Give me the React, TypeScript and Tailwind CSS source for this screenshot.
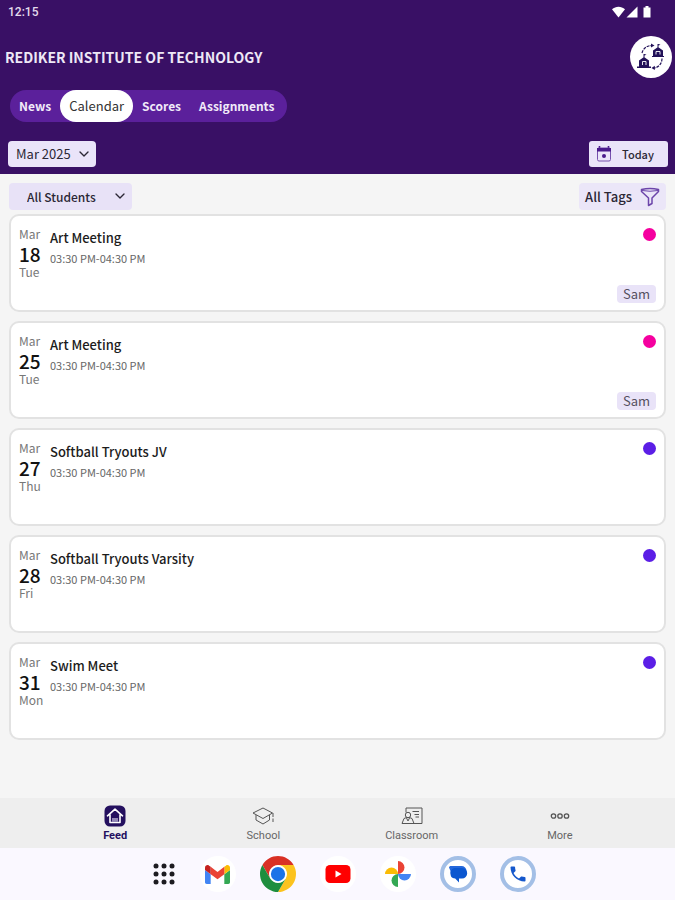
import type { ReactNode } from "react";
import { ChevronDown } from "lucide-react";
import { MdPhone } from "react-icons/md";
import { clsx } from "clsx";

const TABS = ["News", "Calendar", "Scores", "Assignments"];

const EVENTS = [
  { month: "Mar", day: "18", weekday: "Tue", title: "Art Meeting", time: "03:30 PM-04:30 PM", dot: "bg-[#f5009f]", student: "Sam" },
  { month: "Mar", day: "25", weekday: "Tue", title: "Art Meeting", time: "03:30 PM-04:30 PM", dot: "bg-[#f5009f]", student: "Sam" },
  { month: "Mar", day: "27", weekday: "Thu", title: "Softball Tryouts JV", time: "03:30 PM-04:30 PM", dot: "bg-[#5b1ee6]" },
  { month: "Mar", day: "28", weekday: "Fri", title: "Softball Tryouts Varsity", time: "03:30 PM-04:30 PM", dot: "bg-[#5b1ee6]" },
  { month: "Mar", day: "31", weekday: "Mon", title: "Swim Meet", time: "03:30 PM-04:30 PM", dot: "bg-[#5b1ee6]" },
];

function StatusIcons() {
  return (
    <svg className="h-3 w-10" viewBox="0 0 40 12" fill="#fff" aria-hidden="true">
      <path d="M0 3.2C3.6-.2 9.4-.2 13 3.2L6.5 11.5Z" />
      <path d="M25.5.5v11H14.5Z" />
      <path d="M33.5 0h3v1.5h2v10h-7v-10h2Z" />
    </svg>
  );
}

function SwitchSchoolIcon() {
  return (
    <svg className="size-7" viewBox="0 0 28 28" fill="none" stroke="#221158" aria-hidden="true">
      <path d="M5 10C6 5.5 10 2.5 15 2.5" strokeWidth="1.2" strokeDasharray="3 1" />
      <path d="M14 .5l3.5 2L14 4.5Z" fill="#221158" stroke="none" />
      <path d="M25 15.5C25 20.5 21.5 24.5 17 25" strokeWidth="1.2" strokeDasharray="3 1" />
      <path d="M17.8 22.8L14.5 25l3.3 2Z" fill="#221158" stroke="none" />
      <g fill="#221158" stroke="none">
        <path d="M6.5 11h1v3.5h-1ZM7.5 11l2 .8-2 .8ZM2 17.5l5-3.5 5 3.5v6H2ZM0 23.5h14V25H0Z" />
        <path d="M20.5 1h1v3.5h-1ZM21.5 1l2 .8-2 .8ZM16 7.5L21 4l5 3.5v6H16ZM15 13h12v1H15Z" />
      </g>
      <path d="M5.500 22v-3.500H9V22M19 11.500v-3h4v3" stroke="#fff" strokeWidth=".9" />
    </svg>
  );
}

function CalendarIcon() {
  return (
    <svg className="size-4" viewBox="0 0 16 16" aria-hidden="true">
      <path d="M3.5 0v3M12.5 0v3" stroke="#4a1a8c" strokeWidth="1.6" />
      <rect x="1.5" y="2" width="13" height="13" rx="1.5" fill="none" stroke="#7650ad" />
      <path d="M1 2h14v3.5H1Z" fill="#4a1a8c" />
      <circle cx="8" cy="10" r="2" fill="#4a1a8c" />
    </svg>
  );
}

function FunnelIcon() {
  return (
    <svg className="size-5" viewBox="0 0 20 20" fill="none" stroke="#6c45aa" strokeWidth="1.5" strokeLinejoin="round" aria-hidden="true">
      <path d="M1.5 2.5Q10 .5 18.5 2.5v2L12 11v5.5l-3.5 2V11l-7-6.5Z" />
      <path d="M2 3.5Q10 5 18 3.5" strokeWidth="1" />
    </svg>
  );
}

function FeedIcon() {
  return (
    <svg className="size-[22px]" viewBox="0 0 22 22" fill="none" aria-hidden="true">
      <rect x=".5" y=".5" width="21" height="21" rx="5.5" fill="#24105f" />
      <path d="M3.5 10.8L11 4.2l7.5 6.6M6 9.5v8h10v-8" stroke="#fff" strokeWidth="1.6" strokeLinecap="round" strokeLinejoin="round" />
      <path d="M8 13h6v4H8Z" fill="#9186b5" />
    </svg>
  );
}

function SchoolIcon() {
  return (
    <svg className="size-[22px]" viewBox="0 0 22 22" fill="none" stroke="#555" strokeLinejoin="round" aria-hidden="true">
      <path d="M11 3L1 8l10 5.5L20.5 8Z" />
      <path d="M4 10v5l7 4 6.5-4v-5M21 8v4M21 13.5V17" />
    </svg>
  );
}

function ClassroomIcon() {
  return (
    <svg className="size-[22px]" viewBox="0 0 22 22" fill="none" stroke="#555" aria-hidden="true">
      <path d="M5 7.5V3h16v15.500h-8M11.500 6.500h6.500M13.500 9.500H18M14.500 12H18" />
      <circle cx="7" cy="10" r="2.7" />
      <path d="M1 18.5l2-5 2.500-1h3l2.500 1 2 5ZM5.500 13L7 16l1.500-3" strokeLinejoin="round" />
    </svg>
  );
}

function MoreIcon() {
  return (
    <svg className="size-[22px]" viewBox="0 0 22 22" fill="none" stroke="#555" strokeWidth="1.3" aria-hidden="true">
      <circle cx="4.5" cy="11" r="2.2" />
      <circle cx="11" cy="11" r="2.2" />
      <circle cx="17.5" cy="11" r="2.2" />
    </svg>
  );
}

const NAV_ITEMS = [
  { label: "Feed", icon: FeedIcon },
  { label: "School", icon: SchoolIcon },
  { label: "Classroom", icon: ClassroomIcon },
  { label: "More", icon: MoreIcon },
];

function AppsIcon() {
  return (
    <svg className="size-6" viewBox="0 0 24 24" fill="#1c1b20" aria-hidden="true">
      {[4, 12, 20].map((y) => [4, 12, 20].map((x) => <circle key={`${x}-${y}`} cx={x} cy={y} r="2.5" />))}
    </svg>
  );
}

function GmailIcon() {
  return (
    <svg className="h-[19px] w-[25px]" viewBox="52 42 88 66" aria-hidden="true">
      <path fill="#4285f4" d="M58 108h14V74L52 59v43c0 3.32 2.69 6 6 6" />
      <path fill="#34a853" d="M120 108h14c3.32 0 6-2.69 6-6V59l-20 15" />
      <path fill="#fbbc04" d="M120 48v26l20-15v-8c0-7.42-8.47-11.65-14.4-7.2" />
      <path fill="#ea4335" d="M72 74V48l24 18 24-18v26L96 92" />
      <path fill="#c5221f" d="M52 51v8l20 15V48l-5.6-4.2c-5.94-4.45-14.4-.22-14.4 7.2" />
    </svg>
  );
}

function ChromeIcon() {
  return (
    <svg className="size-9" viewBox="0 0 48 48" aria-hidden="true">
      <circle cx="24" cy="24" r="13" fill="#fff" />
      <path fill="#d93025" d="M24 12h20.78A24 24 0 0 0 3.22 12L13.61 30A12 12 0 0 1 24 12Z" />
      <path fill="#fcc31e" d="M34.39 30L24 48A24 24 0 0 0 44.78 12H24A12 12 0 0 1 34.39 30Z" />
      <path fill="#1e8e3e" d="M13.61 30L3.22 12A24 24 0 0 0 24 48L34.39 30A12 12 0 0 1 13.61 30Z" />
      <circle cx="24" cy="24" r="9.5" fill="#1a73e8" />
    </svg>
  );
}

function YouTubeIcon() {
  return (
    <svg className="h-[18px] w-[26px]" viewBox="0 0 26 18" aria-hidden="true">
      <rect x=".5" width="25" height="18" rx="4.5" fill="#f00" />
      <path d="M10.5 5.5v7l6-3.5Z" fill="#fff" />
    </svg>
  );
}

function PhotosIcon() {
  return (
    <svg className="size-[26px]" viewBox="0 0 26 26" aria-hidden="true">
      <path fill="#ea4335" d="M13 0a6.5 6.5 0 0 1 0 13Z" />
      <path fill="#4285f4" d="M26 13a6.5 6.5 0 0 1-13 0Z" />
      <path fill="#34a853" d="M13 26a6.5 6.5 0 0 1 0-13Z" />
      <path fill="#fbbc04" d="M0 13a6.5 6.5 0 0 1 13 0Z" />
    </svg>
  );
}

function MessagesIcon() {
  return (
    <svg className="size-[22px] shrink-0" viewBox="0 0 22 22" aria-hidden="true">
      <path fill="#2467db" d="M2 4.500C2 3.500 3 3 4 3h10.500a5 5 0 0 1 0 10H7C3.500 13 3.500 10 3.500 8Z" />
      <path fill="#0b57d0" d="M8.500 5H15a5.200 5.200 0 0 1 0 10.400h-3v4l-3.800-4C4.500 15.400 3.500 13 3.500 10.500 3.500 7.500 5 5 8.500 5Z" />
    </svg>
  );
}

function DockButton({ label, className, children }: { label: string; className?: string; children: ReactNode }) {
  return (
    <div className="flex w-[60px] justify-center">
      <button aria-label={label} className={clsx("flex size-9 items-center justify-center rounded-full", className)}>
        {children}
      </button>
    </div>
  );
}

function EventCard({ event }: { event: (typeof EVENTS)[number] }) {
  return (
    <li className="flex min-h-[98px] rounded-[10px] border-2 border-[#e2e2e2] bg-white px-2 pt-[10px] pb-[7px]">
      <div className="w-[31px] shrink-0 text-xs text-[#777]">
        <p className="leading-4">{event.month}</p>
        <p className="py-0.5 text-[19px] leading-5 font-medium text-[#111]">{event.day}</p>
        <p className="leading-3">{event.weekday}</p>
      </div>
      <div className="flex-1 pt-0.5">
        <h2 className="text-[13px] leading-5 font-medium text-[#1c1c1c]">{event.title}</h2>
        <p className="text-[11px] leading-5 text-[#666]">{event.time}</p>
      </div>
      <div className="flex flex-col items-end justify-between">
        <span className={clsx("mt-0.5 size-[13px] rounded-full", event.dot)} />
        {event.student && (
          <span className="rounded bg-[#e9e3f8] px-1.5 text-[13px] leading-[18px] text-[#555060]">{event.student}</span>
        )}
      </div>
    </li>
  );
}

export default function App() {
  return (
    <div className="flex min-h-screen flex-col bg-[#f5f5f5] font-['Noto_Sans_CJK_SC',sans-serif]">
      <header className="bg-[#391065] pb-[7px]">
        <div className="flex h-6 items-center justify-between pr-[23px] pl-2 font-[Roboto,sans-serif] text-xs font-medium text-[#e4dcec]">
          <span>12:15</span>
          <StatusIcons />
        </div>

        <div className="flex h-[66px] items-center justify-between pr-[3px] pl-[5px]">
          <h1 className="text-sm font-bold text-[#eee8f6]">REDIKER INSTITUTE OF TECHNOLOGY</h1>
          <button aria-label="Switch school" className="flex size-[42px] items-center justify-center rounded-full bg-white">
            <SwitchSchoolIcon />
          </button>
        </div>

        <nav className="ml-[10px] flex h-8 w-fit rounded-full bg-[#5b209b] pr-1">
          {TABS.map((tab) => (
            <a
              key={tab}
              href="#"
              className={clsx(
                "flex items-center rounded-full px-[9px]",
                tab === "Calendar" ? "bg-white text-[13px] text-[#333]" : "text-xs font-bold text-[#f1eaf9]"
              )}
            >
              {tab}
            </a>
          ))}
        </nav>

        <div className="mt-[19px] flex h-[26px] justify-between pr-[7px] pl-2 text-[#2b2735]">
          <div className="relative">
            <select aria-label="Month" className="block h-full w-[88px] appearance-none rounded bg-[#eae4f9] pl-2 text-[13px]">
              <option>Mar 2025</option>
            </select>
            <ChevronDown className="pointer-events-none absolute top-[5px] right-1 size-4" />
          </div>
          <button className="flex w-[79px] items-center rounded-[3px] bg-[#eae4f9] pl-[7px] text-[11px] font-medium">
            <CalendarIcon />
            <span className="flex-1 pr-1 text-center">Today</span>
          </button>
        </div>
      </header>

      <main className="flex-1 px-[9px] pt-[9px]">
        <div className="flex h-[27px] justify-between font-medium text-[#2b2735]">
          <div className="relative">
            <select aria-label="Students" className="block h-full w-[123px] appearance-none rounded bg-[#e8e2f7] pl-[18px] text-xs">
              <option>All Students</option>
            </select>
            <ChevronDown className="pointer-events-none absolute top-[5px] right-1 size-4" />
          </div>
          <button className="flex items-center gap-2 rounded bg-[#ebe6f8] px-1.5 text-[13px]">
            All Tags
            <FunnelIcon />
          </button>
        </div>

        <ul className="mt-1 flex flex-col gap-[9px]">
          {EVENTS.map((event) => (
            <EventCard key={event.day} event={event} />
          ))}
        </ul>
      </main>

      <nav className="grid h-[50px] grid-cols-4 bg-[#eee] px-[41px] font-[Roboto,sans-serif] text-[11px]">
        {NAV_ITEMS.map((item) => (
          <a
            key={item.label}
            href="#"
            className={clsx(
              "flex flex-col items-center pt-[7px] leading-[18px]",
              item.label === "Feed" ? "font-bold text-[#24105f]" : "text-[#666]"
            )}
          >
            <item.icon />
            {item.label}
          </a>
        ))}
      </nav>

      {/* System dock */}
      <footer className="flex h-[52px] items-center justify-center bg-[#faf8ff] pl-3">
        <button aria-label="All apps" className="flex w-12 justify-center">
          <AppsIcon />
        </button>
        <DockButton label="Gmail" className="bg-white"><GmailIcon /></DockButton>
        <DockButton label="Chrome"><ChromeIcon /></DockButton>
        <DockButton label="YouTube" className="bg-white"><YouTubeIcon /></DockButton>
        <DockButton label="Photos" className="bg-white"><PhotosIcon /></DockButton>
        <DockButton label="Messages" className="border-4 border-[#a3bfe6] bg-white"><MessagesIcon /></DockButton>
        <DockButton label="Phone" className="border-4 border-[#a3bfe6] bg-white">
          <MdPhone className="size-5 text-[#1558cc]" />
        </DockButton>
      </footer>
    </div>
  );
}
